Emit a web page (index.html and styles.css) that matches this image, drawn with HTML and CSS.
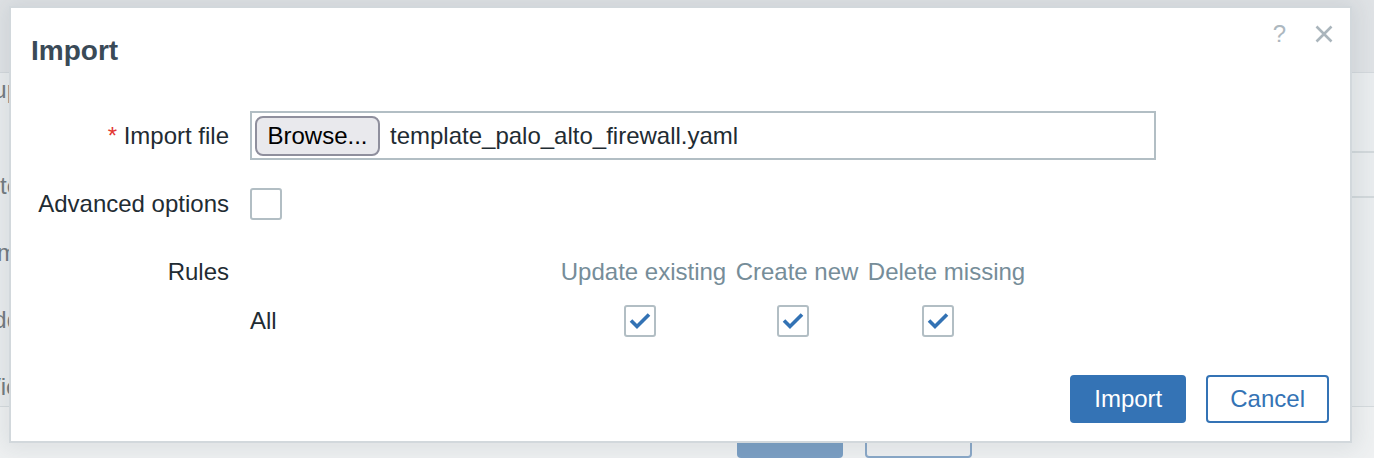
FILE: index.html
```html
<!DOCTYPE html>
<html>
<head>
<meta charset="utf-8">
<link rel="stylesheet" href="styles.css">
</head>
<body>
<div class="page">
  <div class="page-head"></div>
  <div class="page-body">
    <div class="bg-labels">
      <div class="bg-label bg-l1">Group</div>
      <div class="bg-label bg-l2">Ite</div>
      <div class="bg-label bg-l3">Nam</div>
      <div class="bg-label bg-l4">Add</div>
      <div class="bg-label bg-l5">Vic</div>
    </div>
    <div class="bg-side">
      <div class="bg-side-a"></div>
      <div class="bg-side-b"></div>
    </div>
  </div>
  <div class="page-foot">
    <span class="bg-btn bg-btn-primary"></span>
    <span class="bg-btn bg-btn-alt"></span>
  </div>
</div>

<div class="dialog">
  <div class="dlg-head">
    <h4 class="dlg-title">Import</h4>
    <div class="dlg-ctrls">
      <span class="dlg-help">?</span>
      <svg class="dlg-close" width="18" height="18" viewBox="0 0 18 18"><path d="M1.5 1.5 L16.5 16.5 M16.5 1.5 L1.5 16.5" stroke="#aab5bc" stroke-width="2.6" fill="none"/></svg>
    </div>
  </div>

  <div class="form">
    <div class="form-label"><span class="req">*</span> Import file</div>
    <div class="form-field">
      <div class="file-box">
        <button class="browse">Browse...</button>
        <span class="file-name">template_palo_alto_firewall.yaml</span>
      </div>
    </div>

    <div class="form-label row2">Advanced options</div>
    <div class="form-field row2">
      <span class="cb"></span>
    </div>

    <div class="form-label row3">Rules</div>
    <div class="form-field row3">
      <div class="rules">
        <div class="rh"></div>
        <div class="rh">Update existing</div>
        <div class="rh">Create new</div>
        <div class="rh">Delete missing</div>

        <div class="rname">All</div>
        <div class="rcell c1"><span class="cb on"><svg width="28" height="28" viewBox="0 0 28 28"><path d="M5 13.5 L11 19.5 L23 7.5" stroke="#3372b4" stroke-width="3.6" fill="none"/></svg></span></div>
        <div class="rcell c2"><span class="cb on"><svg width="28" height="28" viewBox="0 0 28 28"><path d="M5 13.5 L11 19.5 L23 7.5" stroke="#3372b4" stroke-width="3.6" fill="none"/></svg></span></div>
        <div class="rcell c3"><span class="cb on"><svg width="28" height="28" viewBox="0 0 28 28"><path d="M5 13.5 L11 19.5 L23 7.5" stroke="#3372b4" stroke-width="3.6" fill="none"/></svg></span></div>
      </div>
    </div>
  </div>

  <div class="dlg-foot">
    <button class="btn btn-primary">Import</button>
    <button class="btn btn-alt">Cancel</button>
  </div>
</div>
</body>
</html>
```

FILE: styles.css
```css
* { box-sizing: border-box; }
html, body { margin: 0; padding: 0; }
body {
  width: 1374px;
  height: 458px;
  overflow: hidden;
  position: relative;
  background: #eceef0;
  font-family: "Liberation Sans", Arial, sans-serif;
  color: #1f2c33;
}

/* background page */
.page { height: 458px; display: flex; flex-direction: column; }
.page-head {
  height: 77px;
  background: #e0e3e6;
  border-bottom: 1px solid #d4d9dd;
}
.page-body {
  height: 350px;
  display: flex;
  justify-content: space-between;
  background: #eaedef;
}
.bg-labels { width: 20px; display: flex; flex-direction: column; align-items: flex-end; }
.bg-label {
  font-size: 24px;
  line-height: 30px;
  height: 30px;
  color: #737b81;
  white-space: nowrap;
  text-align: right;
}
.bg-l1 { margin-top: 2px; }
.bg-l2 { margin-top: 66px; }
.bg-l3 { margin-top: 37px; margin-right: 3px; }
.bg-l4 { margin-top: 37px; }
.bg-l5 { margin-top: 37px; margin-right: 2px; }
.bg-side { width: 500px; }
.bg-side-a { height: 80px; border-bottom: 2px solid #d3d9dc; }
.bg-side-b { height: 45px; border-bottom: 2px solid #d3d9dc; }
.page-foot {
  flex: 1;
  border-top: 1px solid #d6dbde;
  background: #eff1f2;
  padding: 21px 0 0 737px;
  display: flex;
  gap: 22px;
}
.bg-btn { display: block; height: 30px; border-radius: 4px; }
.bg-btn-primary { width: 106px; background: #7b9fc4; }
.bg-btn-alt { width: 107px; border: 2px solid #8aa8c8; background: #eef0f2; }

/* dialog */
.dialog {
  position: absolute;
  left: 9px;
  top: 6px;
  width: 1343px;
  height: 437px;
  background: #fff;
  border: 2px solid #d2d8dc;
  box-shadow: 0 0 22px 6px rgba(60, 75, 85, 0.10);
  display: flex;
  flex-direction: column;
}
.dlg-head {
  display: flex;
  justify-content: space-between;
  align-items: flex-start;
  padding: 27px 17px 0 20px;
}
.dlg-title {
  margin: 0;
  font-size: 28px;
  line-height: 32px;
  font-weight: bold;
  color: #3a4a57;
}
.dlg-ctrls {
  display: flex;
  align-items: center;
  height: 30px;
  margin-top: -16px;
}
.dlg-help {
  font-size: 24px;
  line-height: 30px;
  color: #adb8bf;
}
.dlg-close { display: block; margin-left: 29px; }

.form {
  display: grid;
  grid-template-columns: 200px 1fr;
  column-gap: 21px;
  padding-left: 18px;
  margin-top: 44px;
  font-size: 24px;
}
.form-label {
  text-align: right;
  line-height: 30px;
  align-self: center;
  white-space: nowrap;
}
.form-field { display: flex; align-items: center; }
.row2 { margin-top: 28px; }
.row3 { margin-top: 37px; align-self: start; }
.req { color: #e33734; }

.file-box {
  width: 906px;
  height: 49px;
  border: 2px solid #b2bec4;
  display: flex;
  align-items: center;
  padding-left: 3px;
}
.browse {
  height: 40px;
  width: 125px;
  padding: 0;
  font-family: "Liberation Sans", Arial, sans-serif;
  font-size: 24px;
  color: #000;
  background: #e9e9ed;
  border: 2px solid #8f8f9d;
  border-radius: 8px;
}
.file-name { margin-left: 10px; line-height: 30px; color: #1f2c33; }

.cb {
  display: flex;
  align-items: center;
  justify-content: center;
  width: 32px;
  height: 32px;
  border: 2px solid #b2bec4;
  border-radius: 3px;
  background: #fff;
}
.cb svg { display: block; }

.rules {
  display: grid;
  grid-template-columns: 306px 175px 132px 167px;
  grid-template-rows: 30px 32px;
  row-gap: 18px;
}
.rh {
  text-align: center;
  line-height: 30px;
  color: #768d99;
  white-space: nowrap;
}
.rname { line-height: 30px; align-self: center; }
.rcell { display: flex; justify-content: center; align-items: center; }
.c1 { padding-right: 8px; }
.c2 { padding-right: 9px; }
.c3 { padding-right: 18px; }

.dlg-foot {
  margin-top: auto;
  display: flex;
  justify-content: flex-end;
  gap: 20px;
  padding: 0 21px 18px 0;
}
.btn {
  height: 48px;
  font-family: "Liberation Sans", Arial, sans-serif;
  font-size: 24px;
  border-radius: 4px;
  cursor: pointer;
}
.btn-primary {
  background: #3473b5;
  color: #fff;
  border: 2px solid #3473b5;
  padding: 0 22px;
}
.btn-alt {
  background: #fff;
  color: #3473b5;
  border: 2px solid #3473b5;
  padding: 0 22px;
}
```
